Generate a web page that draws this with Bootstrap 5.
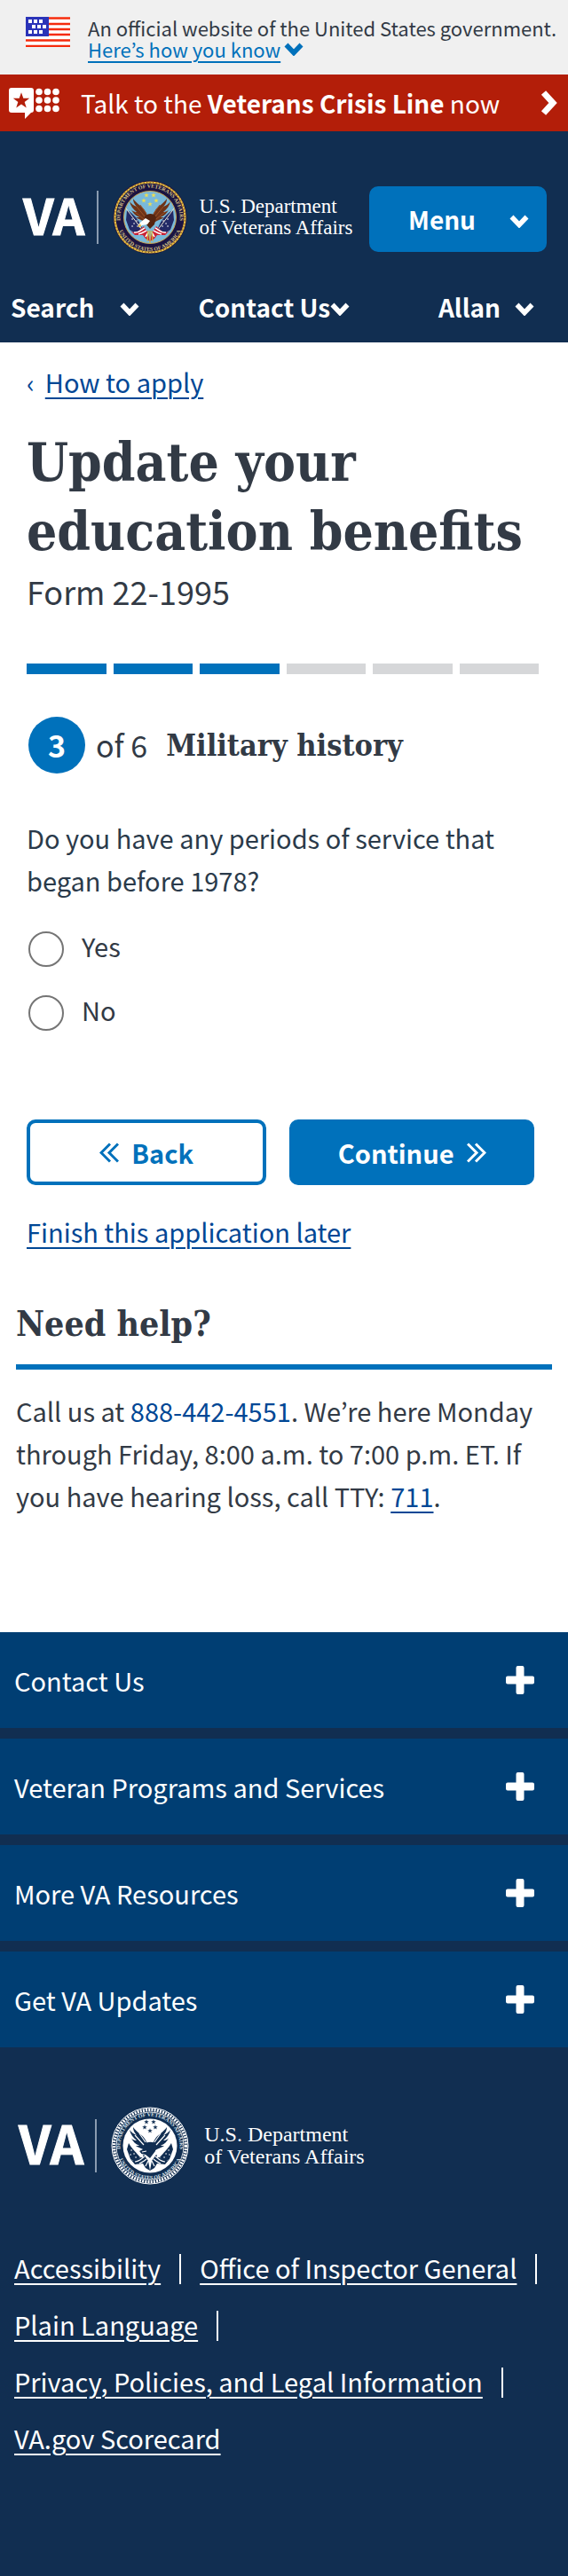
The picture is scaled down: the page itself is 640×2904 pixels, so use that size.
<!DOCTYPE html>
<html lang="en">
<head>
<meta charset="utf-8">
<meta name="viewport" content="width=device-width, initial-scale=1">
<title>Update your education benefits | Veterans Affairs</title>
<link rel="stylesheet" href="https://cdn.jsdelivr.net/npm/bootstrap@5.3.0/dist/css/bootstrap.min.css">
<style>
  :root { --navy:#112e51; --panel:#003e73; --blue:#0071bb; --link:#004795; --ink:#323a45; --crisis:#b31e09; }
  body { font-family:"Noto Sans CJK KR","Noto Sans",sans-serif; font-size:29px; line-height:48px; color:var(--ink); background:#fff; }
  a { color:var(--link); text-decoration-thickness:2px; text-underline-offset:5px; }
  svg { display:block; flex:none; }
  .slab { font-family:"DejaVu Serif Condensed","DejaVu Serif",serif; font-weight:700; color:var(--ink); }

  .gov-banner { background:#f0f0f0; padding:19px 0 17px 29px; gap:20px; font-size:22px; line-height:24px; }
  .gov-banner button { color:var(--blue); text-decoration:underline; text-decoration-thickness:2px; text-underline-offset:4px; }
  .gov-banner button + svg { color:var(--blue); }
  .plain-btn { background:none; border:0; padding:0; font:inherit; color:inherit; }
  .crisis { background:var(--crisis); height:64px; padding:0 12px 0 10px; color:#fff; font-size:28px; line-height:64px; text-decoration:none; }
  .crisis:hover { color:#fff; }

  .site-header { background:var(--navy); color:#fff; font-size:28px; padding-bottom:8px; }
  .site-header button svg { margin-top:4px; }
  .brand-row { padding:55px 24px 11px 26px; }
  .dept { font-family:"Liberation Serif",serif; font-size:23px; line-height:24px; margin-left:14px; }
  .va-mark { font-weight:700; font-size:56px; line-height:56px; padding-bottom:8px; -webkit-text-stroke:1px #fff; }
  .rule-v { width:2px; height:60px; background:#8a9bb0; margin:0 16px 0 13px; }
  .menu-btn { background:var(--blue); color:#fff; border-radius:10px; width:200px; height:74px; padding:0 20px 0 44px; font-size:28px; font-weight:700; border:0; }
  .menu-btn:hover { background:#205493; color:#fff; }
  .header-nav { padding:20px 38px 4px 12px; font-weight:700; line-height:56px; }
  .header-nav .search { gap:29px; margin-right:66px; }

  .crumb { padding-top:20px; gap:12px; color:var(--link); }
  .page-main { padding:0 32px 0 30px; }
  h1.slab { font-size:60px; line-height:78px; margin:28px 0 0; }
  .form-no { font-size:36px; line-height:48px; margin-top:4px; }
  .steps { gap:8px; margin-top:58px; padding-right:1px; }
  .steps span { flex:1; height:12px; background:#d6d7d9; }
  .steps .done { background:var(--blue); }
  .step-head { margin:48px 0 0 2px; height:64px; }
  .step-no { width:64px; height:64px; border-radius:50%; background:var(--blue); color:#fff; font-size:34px; font-weight:700; }
  .step-of { font-size:34px; margin-left:12px; }
  .step-head h2 { font-size:34px; line-height:48px; margin:0 0 0 21px; }
  fieldset { margin-top:48px; }
  legend { font-size:29px; line-height:48px; margin:0; color:#2a3a4a; max-width:560px; float:none; }
  .choice { margin:0 0 0 2px; padding:0; min-height:72px; gap:20px; line-height:32px; }
  .choice .form-check-input { width:40px; height:40px; margin:0; float:none; border:2px solid #757575; flex:none; }
  .choice .form-check-input:checked { background-color:var(--blue); border-color:var(--blue); }
  .choices { padding-top:34px; }
  .btn-va { height:74px; border-radius:10px; font-size:29px; line-height:48px; font-weight:700; border:4px solid var(--blue); gap:14px; }
  .btn-va.solid { background:var(--blue); color:#fff; }
  .btn-va.line { background:#fff; color:var(--blue); }
  .actions { margin-top:68px; gap:26px; padding-right:6px; }
  .actions .line { flex:270 1 0; } .actions .solid { flex:276 1 0; }
  .later { margin-top:28px; }
  .help { padding:52px 18px 130px; }
  .help h2 { font-size:39px; line-height:56px; margin:0; padding-bottom:18px; border-bottom:6px solid var(--blue); }
  .help p { margin:22px 0 0; }

  .site-footer { background:var(--navy); color:#fff; }
  .panels { gap:12px; }
  .panels button { background:var(--panel); height:108px; padding:0 38px 0 16px; border:0; color:#fff; font-size:29px; }
  .foot-brand { padding:67px 20px 49px 21px; }
  .foot-brand .va-mark { font-size:59px; }
  .foot-brand .dept { font-size:24px; line-height:25px; margin-left:17px; }
  .foot-links { padding:12px 0 124px 16px; line-height:64px; }
  .foot-links a { color:#fff; }
  .foot-links li { display:flex; align-items:center; }
  .foot-links li:not(:last-child)::after { content:""; width:2px; height:34px; background:#fff; margin:4px 21px 0; }
</style>
</head>
<body>
<svg width="0" height="0" class="position-absolute" aria-hidden="true">
  <defs>
    <symbol id="down" viewBox="0 0 22 15"><path d="M2.500 2.500 11 11.500 19.500 2.500" fill="none" stroke="currentColor" stroke-width="5.500"/></symbol>
    <symbol id="plus" viewBox="0 0 32 32"><path d="M13.500 0h5a2 2 0 0 1 2 2v9.500H30a2 2 0 0 1 2 2v5a2 2 0 0 1-2 2h-9.500V30a2 2 0 0 1-2 2h-5a2 2 0 0 1-2-2v-9.500H2a2 2 0 0 1-2-2v-5a2 2 0 0 1 2-2h9.500V2a2 2 0 0 1 2-2z" fill="currentColor"/></symbol>
    <path id="star" d="M0-4 1-1.200 4-1.200 1.600.6 2.500 3.500 0 1.700-2.500 3.500-1.600.6-4-1.200-1-1.200z"/>
    <path id="arcTop" d="M-33 6.500A33.600 33.600 0 1 1 33 6.500"/>
    <path id="arcBottom" d="M-36.500 10A37.800 37.800 0 0 0 36.500 10"/>
    <path id="wing" d="M-3 8C-7 3-12 3-16 0c2 0 3 0 4-.5-4-1-7-4-9-8 2 2 4 2.500 6 2.500-4-3-7-7-8-12 2 3 5 5 8 6-3-3-4-6-4-9C-15-15-9-13-6-8-3-4-2 2-1 7z"/>
  </defs>
</svg>

<div class="gov-banner d-flex">
  <svg width="50" height="34" viewBox="0 0 50 34" role="img" aria-label="U.S. flag">
    <rect width="50" height="34" fill="#fff"/>
    <path d="M0 1.500h50M0 8h50M0 14h50M0 20h50M0 26.500h50M0 33h50" stroke="#f52b0c" stroke-width="2.500"/>
    <rect width="26" height="22" fill="#2a33b8"/>
    <path d="M3 5h16M7 11h18M3 17h16" stroke="#fff" stroke-width="4" stroke-dasharray="4 2"/>
  </svg>
  <div>
    <div>An official website of the United States government.</div>
    <div class="d-flex align-items-center"><button class="plain-btn" type="button">Here’s how you know</button><svg class="ms-1" width="22" height="15"><use href="#down"/></svg></div>
  </div>
</div>

<a class="crisis d-flex align-items-center" href="#crisis">
  <svg width="57" height="35" viewBox="0 0 57 35" aria-hidden="true">
    <path d="M3 0h22a3 3 0 0 1 3 3v22a3 3 0 0 1-3 3l-7 7V28H3a3 3 0 0 1-3-3V3a3 3 0 0 1 3-3z" fill="#fff"/>
    <use href="#star" transform="translate(14 14.500) scale(2.300)" fill="#b31e09"/>
    <g fill="#fff"><circle cx="34" cy="4.500" r="3.800"/><circle cx="43.500" cy="4.500" r="3.800"/><circle cx="53" cy="4.500" r="3.800"/><circle cx="34" cy="14" r="3.800"/><circle cx="43.500" cy="14" r="3.800"/><circle cx="53" cy="14" r="3.800"/><circle cx="34" cy="23.500" r="3.800"/><circle cx="43.500" cy="23.500" r="3.800"/><circle cx="53" cy="23.500" r="3.800"/></g>
  </svg>
  <span class="ms-4">Talk to the <strong>Veterans Crisis Line</strong> now</span>
  <svg class="ms-auto" width="19" height="28" viewBox="0 0 19 28" aria-hidden="true"><path d="M3.500 2.500 14 14 3.500 25.500" fill="none" stroke="#fff" stroke-width="7"/></svg>
</a>

<header class="site-header">
  <div class="brand-row d-flex align-items-center justify-content-between">
    <a class="d-flex align-items-center text-white text-decoration-none" href="#home">
      <span class="va-mark">VA</span>
      <span class="rule-v"></span>
      <svg width="84" height="84" viewBox="-42 -42 84 84" role="img" aria-label="Seal of the Department of Veterans Affairs">
        <circle r="41.500" fill="#1b1442"/>
        <circle r="39.500" fill="none" stroke="#e8bd45" stroke-width="2.200"/>
        <circle r="39.500" fill="none" stroke="#8a6420" stroke-width="2.200" stroke-dasharray="1 2.500"/>
        <circle r="29.500" fill="#79b9da" stroke="#c9a552" stroke-width="1"/>
        <g fill="#d9c489" font-family="Liberation Serif" font-weight="700" font-size="6">
          <text><textPath href="#arcTop" startOffset="50%" text-anchor="middle">DEPARTMENT OF VETERANS AFFAIRS</textPath></text>
          <text><textPath href="#arcBottom" startOffset="50%" text-anchor="middle">UNITED STATES OF AMERICA</textPath></text>
        </g>
        <g fill="#f4e04a"><use href="#star" transform="translate(-4 -25) scale(.7)"/><use href="#star" transform="translate(4 -25) scale(.7)"/><use href="#star" transform="translate(-7 -19) scale(.7)"/><use href="#star" transform="translate(7 -19) scale(.7)"/><use href="#star" transform="translate(0 -15) scale(.7)"/></g>
        <path d="M-26-8C-18-4-12 4-9 12L-15 19-23 14-27 3zM26-8C18-4 12 4 9 12L15 19 23 14 27 3z" fill="#232a66"/>
        <path d="M-27-10-8 15M27-10 8 15" stroke="#eee6d0" stroke-width="1"/>
        <path d="M-20 2h.1M-18 7h.1M-15 4h.1M-20 10h.1M-14 10h.1M20 2h.1M18 7h.1M15 4h.1M20 10h.1M14 10h.1" stroke="#fff" stroke-width="1.500" stroke-linecap="round"/>
        <path d="M-22 15C-16 20-12 14-7 10L-2 18 0 27-5 24-8 20-17 20zM22 15C16 20 12 14 7 10L2 18 0 27 5 24 8 20 17 20z" fill="#c92335"/>
        <path d="M-18 17C-12 18-10 14-6 12M-13 19C-8 18-6 16-4 15M-5 22-2 17M18 17C12 18 10 14 6 12M13 19C8 18 6 16 4 15M5 22 2 17" fill="none" stroke="#fff" stroke-width="1.500"/>
        <use href="#wing" fill="#6e3318"/><use href="#wing" fill="#6e3318" transform="scale(-1 1)"/>
        <path d="M-6-1C-3-5 4-5 7-1L5 8 0 13-5 7z" fill="#54240f"/>
        <path d="M-15-12-6-1M-11-14-4-4M15-12 6-1M11-14 4-4M-17-6-7 2M17-6 7 2" stroke="#9b5327" stroke-width="1"/>
        <path d="M-10 5-5 1 0 4-3 8-9 9-12 12-13 8z" fill="#fff"/><path d="M-11 7-14 11-10 10z" fill="#e5b72f"/>
        <path d="M-2 15-3 27M0 15 0 29M2 15 3 27" stroke="#d9b334" stroke-width="1.200"/>
      </svg>
      <span class="dept">U.S. Department<br>of Veterans Affairs</span>
    </a>
    <button class="menu-btn btn d-flex align-items-center justify-content-between mt-1" type="button">Menu<svg width="22" height="15"><use href="#down"/></svg></button>
  </div>
  <nav class="header-nav d-flex" aria-label="Account">
    <button class="plain-btn search d-flex align-items-center" type="button">Search<svg width="22" height="15"><use href="#down"/></svg></button>
    <button class="plain-btn d-flex align-items-center" type="button">Contact Us<svg width="22" height="15"><use href="#down"/></svg></button>
    <button class="plain-btn d-flex align-items-center gap-3 ms-auto" type="button">Allan<svg width="22" height="15"><use href="#down"/></svg></button>
  </nav>
</header>

<main>
  <div class="page-main">
    <nav class="crumb d-flex" aria-label="Breadcrumb"><span>‹</span><a href="#apply">How to apply</a></nav>
    <h1 class="slab">Update your education benefits</h1>
    <div class="form-no">Form 22-1995</div>
    <div class="steps d-flex" role="img" aria-label="Step 3 of 6"><span class="done"></span><span class="done"></span><span class="done"></span><span></span><span></span><span></span></div>
    <div class="step-head d-flex align-items-center">
      <span class="step-no d-flex align-items-center justify-content-center">3</span>
      <span class="step-of">of 6</span>
      <h2 class="slab">Military history</h2>
    </div>
    <form>
      <fieldset>
        <legend>Do you have any periods of service that began before 1978?</legend>
        <div class="choices">
          <div class="choice form-check d-flex align-items-start"><input class="form-check-input" type="radio" name="service" id="yes"><label for="yes">Yes</label></div>
          <div class="choice form-check d-flex align-items-start"><input class="form-check-input" type="radio" name="service" id="no"><label for="no">No</label></div>
        </div>
      </fieldset>
      <div class="actions d-flex">
        <button class="btn btn-va line d-flex align-items-center justify-content-center" type="button"><svg width="22" height="23" viewBox="0 0 22 23" fill="none" stroke="currentColor" stroke-width="3"><path d="M12 1.500 2 11.500 12 21.500M21 1.500 11 11.500 21 21.500"/></svg>Back</button>
        <button class="btn btn-va solid d-flex align-items-center justify-content-center" type="button">Continue<svg width="22" height="23" viewBox="0 0 22 23" fill="none" stroke="currentColor" stroke-width="3"><path d="M1 1.500 11 11.500 1 21.500M10 1.500 20 11.500 10 21.500"/></svg></button>
      </div>
    </form>
    <div class="later"><a href="#later">Finish this application later</a></div>
  </div>
  <section class="help">
    <h2 class="slab">Need help?</h2>
    <p>Call us at <a class="text-decoration-none" href="tel:8884424551">888-442-4551</a>. We’re here Monday through Friday, 8:00 a.m. to 7:00 p.m. ET. If you have hearing loss, call TTY: <a href="tel:711">711</a>.</p>
  </section>
</main>

<footer class="site-footer">
  <div class="panels d-flex flex-column">
    <button class="d-flex align-items-center justify-content-between" type="button">Contact Us<svg width="32" height="32"><use href="#plus"/></svg></button>
    <button class="d-flex align-items-center justify-content-between" type="button">Veteran Programs and Services<svg width="32" height="32"><use href="#plus"/></svg></button>
    <button class="d-flex align-items-center justify-content-between" type="button">More VA Resources<svg width="32" height="32"><use href="#plus"/></svg></button>
    <button class="d-flex align-items-center justify-content-between" type="button">Get VA Updates<svg width="32" height="32"><use href="#plus"/></svg></button>
  </div>
  <div class="foot-brand d-flex align-items-start">
    <a class="d-flex align-items-center text-white text-decoration-none" href="#home">
      <span class="va-mark">VA</span>
      <span class="rule-v"></span>
      <svg width="88" height="88" viewBox="-44 -44 88 88" role="img" aria-label="Seal of the Department of Veterans Affairs">
        <circle r="43" fill="none" stroke="#fff" stroke-width="1"/>
        <circle r="40.500" fill="none" stroke="#fff" stroke-width="3.400" stroke-dasharray="2 1.200"/>
        <circle r="38" fill="none" stroke="#fff" stroke-width=".8"/>
        <circle r="30.500" fill="#fff"/>
        <g fill="#dfe6ee" font-family="Liberation Serif" font-weight="700" font-size="6">
          <text><textPath href="#arcTop" startOffset="50%" text-anchor="middle">DEPARTMENT OF VETERANS AFFAIRS</textPath></text>
          <text><textPath href="#arcBottom" startOffset="50%" text-anchor="middle">UNITED STATES OF AMERICA</textPath></text>
        </g>
        <g fill="#112e51">
          <use href="#star" transform="translate(-4 -27) scale(.7)"/><use href="#star" transform="translate(4 -27) scale(.7)"/><use href="#star" transform="translate(-6 -21) scale(.7)"/><use href="#star" transform="translate(6 -21) scale(.7)"/><use href="#star" transform="translate(0 -17) scale(.7)"/>
          <use href="#wing"/><use href="#wing" transform="scale(-1 1)"/>
          <path d="M-6-2C-3-5 4-5 7-2L6 6 0 14-5 10-10 9-12 6-6 3z"/>
          <path d="M-24-3C-20 4-15 8-11 13L-15 19-22 15-26 4zM24-3C20 4 15 8 11 13L15 19 22 15 26 4z"/>
          <path d="M-22 15C-16 20-12 14-7 10L-2 17 0 28-5 25-8 20-17 21zM22 15C16 20 12 14 7 10L2 17 0 28 5 25 8 20 17 21z"/>
        </g>
        <path d="M-26-9-8 13M26-9 8 13" stroke="#fff" stroke-width="2.500"/>
        <path d="M-21 5h.1M-18 9h.1M-22 10h.1M-16 13h.1M21 5h.1M18 9h.1M22 10h.1M16 13h.1" stroke="#fff" stroke-width="1.500" stroke-linecap="round"/>
        <path d="M-17 18C-12 18-10 15-6 12M-12 20C-8 18-6 17-4 15M-5 23-2 17M17 18C12 18 10 15 6 12M12 20C8 18 6 17 4 15M5 23 2 17M-17-12-7-1M-12-14-5-4M17-12 7-1M12-14 5-4M-9 7-4 6" fill="none" stroke="#fff" stroke-width="1.200"/>
      </svg>
      <span class="dept">U.S. Department<br>of Veterans Affairs</span>
    </a>
  </div>
  <ul class="foot-links list-unstyled d-flex flex-wrap mb-0">
    <li><a href="#accessibility">Accessibility</a></li>
    <li><a href="#oig">Office of Inspector General</a></li>
    <li><a href="#plain">Plain Language</a></li>
    <li><a href="#privacy">Privacy, Policies, and Legal Information</a></li>
    <li><a href="#scorecard">VA.gov Scorecard</a></li>
  </ul>
</footer>
<script src="https://cdn.jsdelivr.net/npm/bootstrap@5.3.0/dist/js/bootstrap.bundle.min.js"></script>
</body>
</html>
